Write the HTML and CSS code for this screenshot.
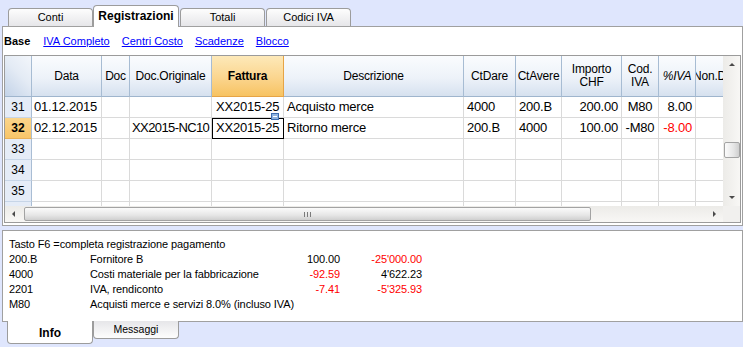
FILE: index.html
```html
<!DOCTYPE html>
<html>
  <head>
    <meta charset="utf-8">
    <title>Registrazioni</title>
    <link rel="stylesheet" href="styles.css">
  </head>
  <body>
    <div class="tabs-top">
      <div class="tab">Conti</div>
      <div class="tab active">Registrazioni</div>
      <div class="tab">Totali</div>
      <div class="tab">Codici IVA</div>
    </div>

    <div class="panel">
      <div class="views">
        <b>Base</b>
        <a href="#">IVA Completo</a>
        <a href="#">Centri Costo</a>
        <a href="#">Scadenze</a>
        <a href="#">Blocco</a>
      </div>

      <div class="grid">
        <div class="grid-main">
          <div class="cells">
            <div class="row head">
              <div class="corner"></div>
              <div>Data</div>
              <div>Doc</div>
              <div>Doc.Originale</div>
              <div class="current">Fattura</div>
              <div>Descrizione</div>
              <div>CtDare</div>
              <div>CtAvere</div>
              <div>Importo<br>CHF</div>
              <div>Cod.<br>IVA</div>
              <div><i>%IVA</i></div>
              <div class="cut"><span>Non.Ded.</span></div>
            </div>
            <div class="row">
              <div class="num">31</div>
              <div>01.12.2015</div>
              <div></div>
              <div class="orig"></div>
              <div class="fatt">XX2015-25</div>
              <div>Acquisto merce</div>
              <div>4000</div>
              <div>200.B</div>
              <div>200.00</div>
              <div>M80</div>
              <div>8.00</div>
              <div></div>
            </div>
            <div class="row">
              <div class="num active">32</div>
              <div>02.12.2015</div>
              <div></div>
              <div class="orig">XX2015-NC10</div>
              <div class="fatt sel">XX2015-25<svg class="flag" width="8" height="7" viewBox="0 0 8 7"><rect x="0.5" y="0.5" width="7" height="6" fill="#8fb4e0" stroke="#3d6eb0"/><path d="M2 3.5h4" stroke="#fff"/></svg></div>
              <div>Ritorno merce</div>
              <div>200.B</div>
              <div>4000</div>
              <div>100.00</div>
              <div>-M80</div>
              <div class="neg">-8.00</div>
              <div></div>
            </div>
            <div class="row">
              <div class="num">33</div>
              <div></div><div></div><div></div><div></div><div></div><div></div><div></div><div></div><div></div><div></div><div></div>
            </div>
            <div class="row">
              <div class="num">34</div>
              <div></div><div></div><div></div><div></div><div></div><div></div><div></div><div></div><div></div><div></div><div></div>
            </div>
            <div class="row">
              <div class="num">35</div>
              <div></div><div></div><div></div><div></div><div></div><div></div><div></div><div></div><div></div><div></div><div></div>
            </div>
            <div class="row">
              <div class="num">36</div>
              <div></div><div></div><div></div><div></div><div></div><div></div><div></div><div></div><div></div><div></div><div></div>
            </div>
          </div>

          <div class="vscroll">
            <div class="btn"><span class="arrow up"></span></div>
            <div class="vtrack"><div class="vthumb"></div></div>
            <div class="btn"><span class="arrow down"></span></div>
          </div>
        </div>

        <div class="grid-foot">
          <div class="hscroll">
            <div class="btn"><span class="arrow left"></span></div>
            <div class="hthumb"><span class="grip"></span></div>
            <div class="htrack"></div>
            <div class="btn"><span class="arrow right"></span></div>
          </div>
          <div class="sizer"></div>
        </div>
      </div>
    </div>

    <div class="info">
      <div class="info-title">Tasto F6 =completa registrazione pagamento</div>
      <div class="info-grid">
        <span>200.B</span><span>Fornitore B</span><span class="amt">100.00</span><span class="amt neg">-25'000.00</span>
        <span>4000</span><span>Costi materiale per la fabbricazione</span><span class="amt neg">-92.59</span><span class="amt">4'622.23</span>
        <span>2201</span><span>IVA, rendiconto</span><span class="amt neg">-7.41</span><span class="amt neg">-5'325.93</span>
        <span>M80</span><span class="wide">Acquisti merce e servizi 8.0% (incluso IVA)</span>
      </div>
    </div>

    <div class="tabs-bottom">
      <div class="btab active">Info</div>
      <div class="btab">Messaggi</div>
    </div>
  </body>
</html>
```

FILE: styles.css
```css
body {
  margin: 0;
  width: 743px;
  height: 347px;
  overflow: hidden;
  background: #dfe6fd;
  font-family: "Liberation Sans", Arial, sans-serif;
  font-size: 11px;
  color: #000;
}

/* top tabs */

.tabs-top {
  display: flex;
  align-items: flex-end;
  height: 26px;
  padding-left: 8px;
}

.tab {
  box-sizing: border-box;
  width: 85px;
  height: 18px;
  margin-left: 1px;
  border: 1px solid #9c9c9c;
  border-bottom: none;
  border-radius: 4px 4px 0 0;
  background: linear-gradient(#fdfdfd, #e6e6e9);
  text-align: center;
  line-height: 17px;
}

.tab:first-child {
  margin-left: 0;
}

.tab.active {
  position: relative;
  z-index: 1;
  width: 86px;
  height: 22px;
  margin-left: 0;
  margin-bottom: -1px;
  background: #fff;
  font-weight: bold;
  font-size: 12px;
  line-height: 21px;
}

/* main panel */

.panel {
  margin-left: 2px;
  border: 1px solid #a0a0a0;
  background: #fff;
  padding-bottom: 2px;
}

.views {
  display: flex;
  align-items: center;
  gap: 12px;
  height: 28px;
  padding-left: 1px;
}

.views b {
  margin-right: 1px;
}

.views a {
  color: #0000ff;
  text-decoration: underline;
}

.grid {
  margin: 0 1px;
  border: 1px solid #9b9b9b;
}

.grid-main {
  display: flex;
  height: 150px;
}

.cells {
  flex: 1;
  overflow: hidden;
}

.row {
  display: grid;
  grid-template-columns: 27px 70px 28px 82px 72px 180px 52px 46px 60px 37px 37px 45px;
  height: 21px;
}

.row > div {
  box-sizing: border-box;
  border-right: 1px solid #dadada;
  border-bottom: 1px solid #dadada;
  padding: 0 3px;
  font-size: 13px;
  letter-spacing: -0.2px;
  line-height: 20px;
  white-space: nowrap;
  overflow: hidden;
}

.row > div:nth-child(2) {
  padding-left: 2px;
}

.row > div:nth-child(9),
.row > div:nth-child(11) {
  text-align: right;
}

.row > div:nth-child(10) {
  text-align: center;
  padding: 0;
}

.row > .orig {
  padding-left: 2px;
  letter-spacing: -0.6px;
}

.row > .fatt {
  padding-left: 4px;
}

.row > .sel {
  position: relative;
  overflow: visible;
  outline: 1px solid #000;
  outline-offset: -1px;
}

.flag {
  position: absolute;
  top: -5px;
  right: 4px;
}

.neg {
  color: #ff0000;
}

.row > .num {
  background: #e5ecf7;
  border-right-color: #a9bdd4;
  border-bottom-color: #c7d5e7;
  padding: 0;
  font-size: 12px;
  letter-spacing: 0;
  text-align: center;
}

.row > .num.active {
  background: linear-gradient(#fbd58b, #f8c569);
  border-bottom-color: #e9b15a;
  font-weight: bold;
}

/* header row */

.row.head {
  height: 41px;
}

.row.head > div {
  display: flex;
  align-items: center;
  justify-content: center;
  padding: 0;
  background: linear-gradient(#fafcfe, #edf2f9 55%, #d6e1ef);
  border-right-color: #a7bcd3;
  border-bottom-color: #9fb5cd;
  font-size: 12px;
  letter-spacing: -0.2px;
  line-height: 13px;
  text-align: center;
}

.row.head > .corner {
  background: linear-gradient(225deg, #f3f6fb 0%, #e4ebf5 45%, #c3d3e8 100%);
}

.row.head > .current {
  background: linear-gradient(#fde9b9, #fbd58e 55%, #f7c362);
  border-right-color: #e6a446;
  border-bottom-color: #e6a446;
  font-weight: bold;
}

.row.head > .cut {
  justify-content: flex-start;
}

.row.head > .cut span {
  margin-left: -3px;
}

/* scrollbars */

.vscroll {
  display: flex;
  flex-direction: column;
  width: 17px;
  background: linear-gradient(to right, #ecebe8, #f8f7f5);
}

.btn {
  display: flex;
  align-items: center;
  justify-content: center;
  width: 17px;
  height: 17px;
  flex: none;
}

.vtrack {
  flex: 1;
}

.vthumb {
  box-sizing: border-box;
  width: 16px;
  height: 16px;
  margin: 69px 0 0 1px;
  border: 1px solid #a3a3a3;
  border-radius: 2px;
  background: linear-gradient(to right, #fbfbfb, #e6e6e6 60%, #cfcfcf);
}

.arrow {
  width: 0;
  height: 0;
  border: 3px solid transparent;
}

.arrow.up {
  border-top: none;
  border-bottom: 3px solid #4a4a4a;
}

.arrow.down {
  border-bottom: none;
  border-top: 3px solid #4a4a4a;
}

.arrow.left {
  border-left: none;
  border-right: 3px solid #4a4a4a;
}

.arrow.right {
  border-right: none;
  border-left: 3px solid #4a4a4a;
}

.grid-foot {
  display: flex;
  height: 16px;
}

.hscroll {
  display: flex;
  flex: 1;
  background: linear-gradient(#ecebe8, #f8f7f5);
}

.hscroll .btn {
  height: 16px;
}

.hthumb {
  box-sizing: border-box;
  display: flex;
  align-items: center;
  justify-content: center;
  width: 567px;
  height: 14px;
  margin: 1px 0 0 2px;
  border: 1px solid #a3a3a3;
  border-radius: 2px;
  background: linear-gradient(#fbfbfb, #e6e6e6 60%, #cfcfcf);
}

.grip {
  width: 7px;
  height: 5px;
  background: repeating-linear-gradient(to right, #7b7b7b 0 1px, transparent 1px 3px);
}

.htrack {
  flex: 1;
}

.sizer {
  width: 17px;
  background: #f1f0ee;
}

/* info panel */

.info {
  box-sizing: border-box;
  height: 92px;
  margin: 4px 0 0 2px;
  padding: 6px 0 0 6px;
  border: 1px solid #a0a0a0;
  background: #fff;
  line-height: 15px;
  letter-spacing: -0.1px;
}

.info-grid {
  display: grid;
  grid-template-columns: 81px 190px 60px 82px;
}

.info-grid .amt {
  text-align: right;
}

.info-grid .wide {
  grid-column: span 3;
}

/* bottom tabs */

.tabs-bottom {
  display: flex;
  align-items: flex-start;
  margin-top: -1px;
  padding-left: 7px;
}

.btab {
  box-sizing: border-box;
  width: 86px;
  height: 18px;
  border: 1px solid #9c9c9c;
  border-top: none;
  border-radius: 0 0 4px 4px;
  background: linear-gradient(#e6e6e9, #fdfdfd);
  text-align: center;
  font-size: 10.5px;
  line-height: 17px;
}

.btab.active {
  position: relative;
  z-index: 1;
  height: 23px;
  background: #fff;
  font-size: 12px;
  font-weight: bold;
  line-height: 24px;
}
```
